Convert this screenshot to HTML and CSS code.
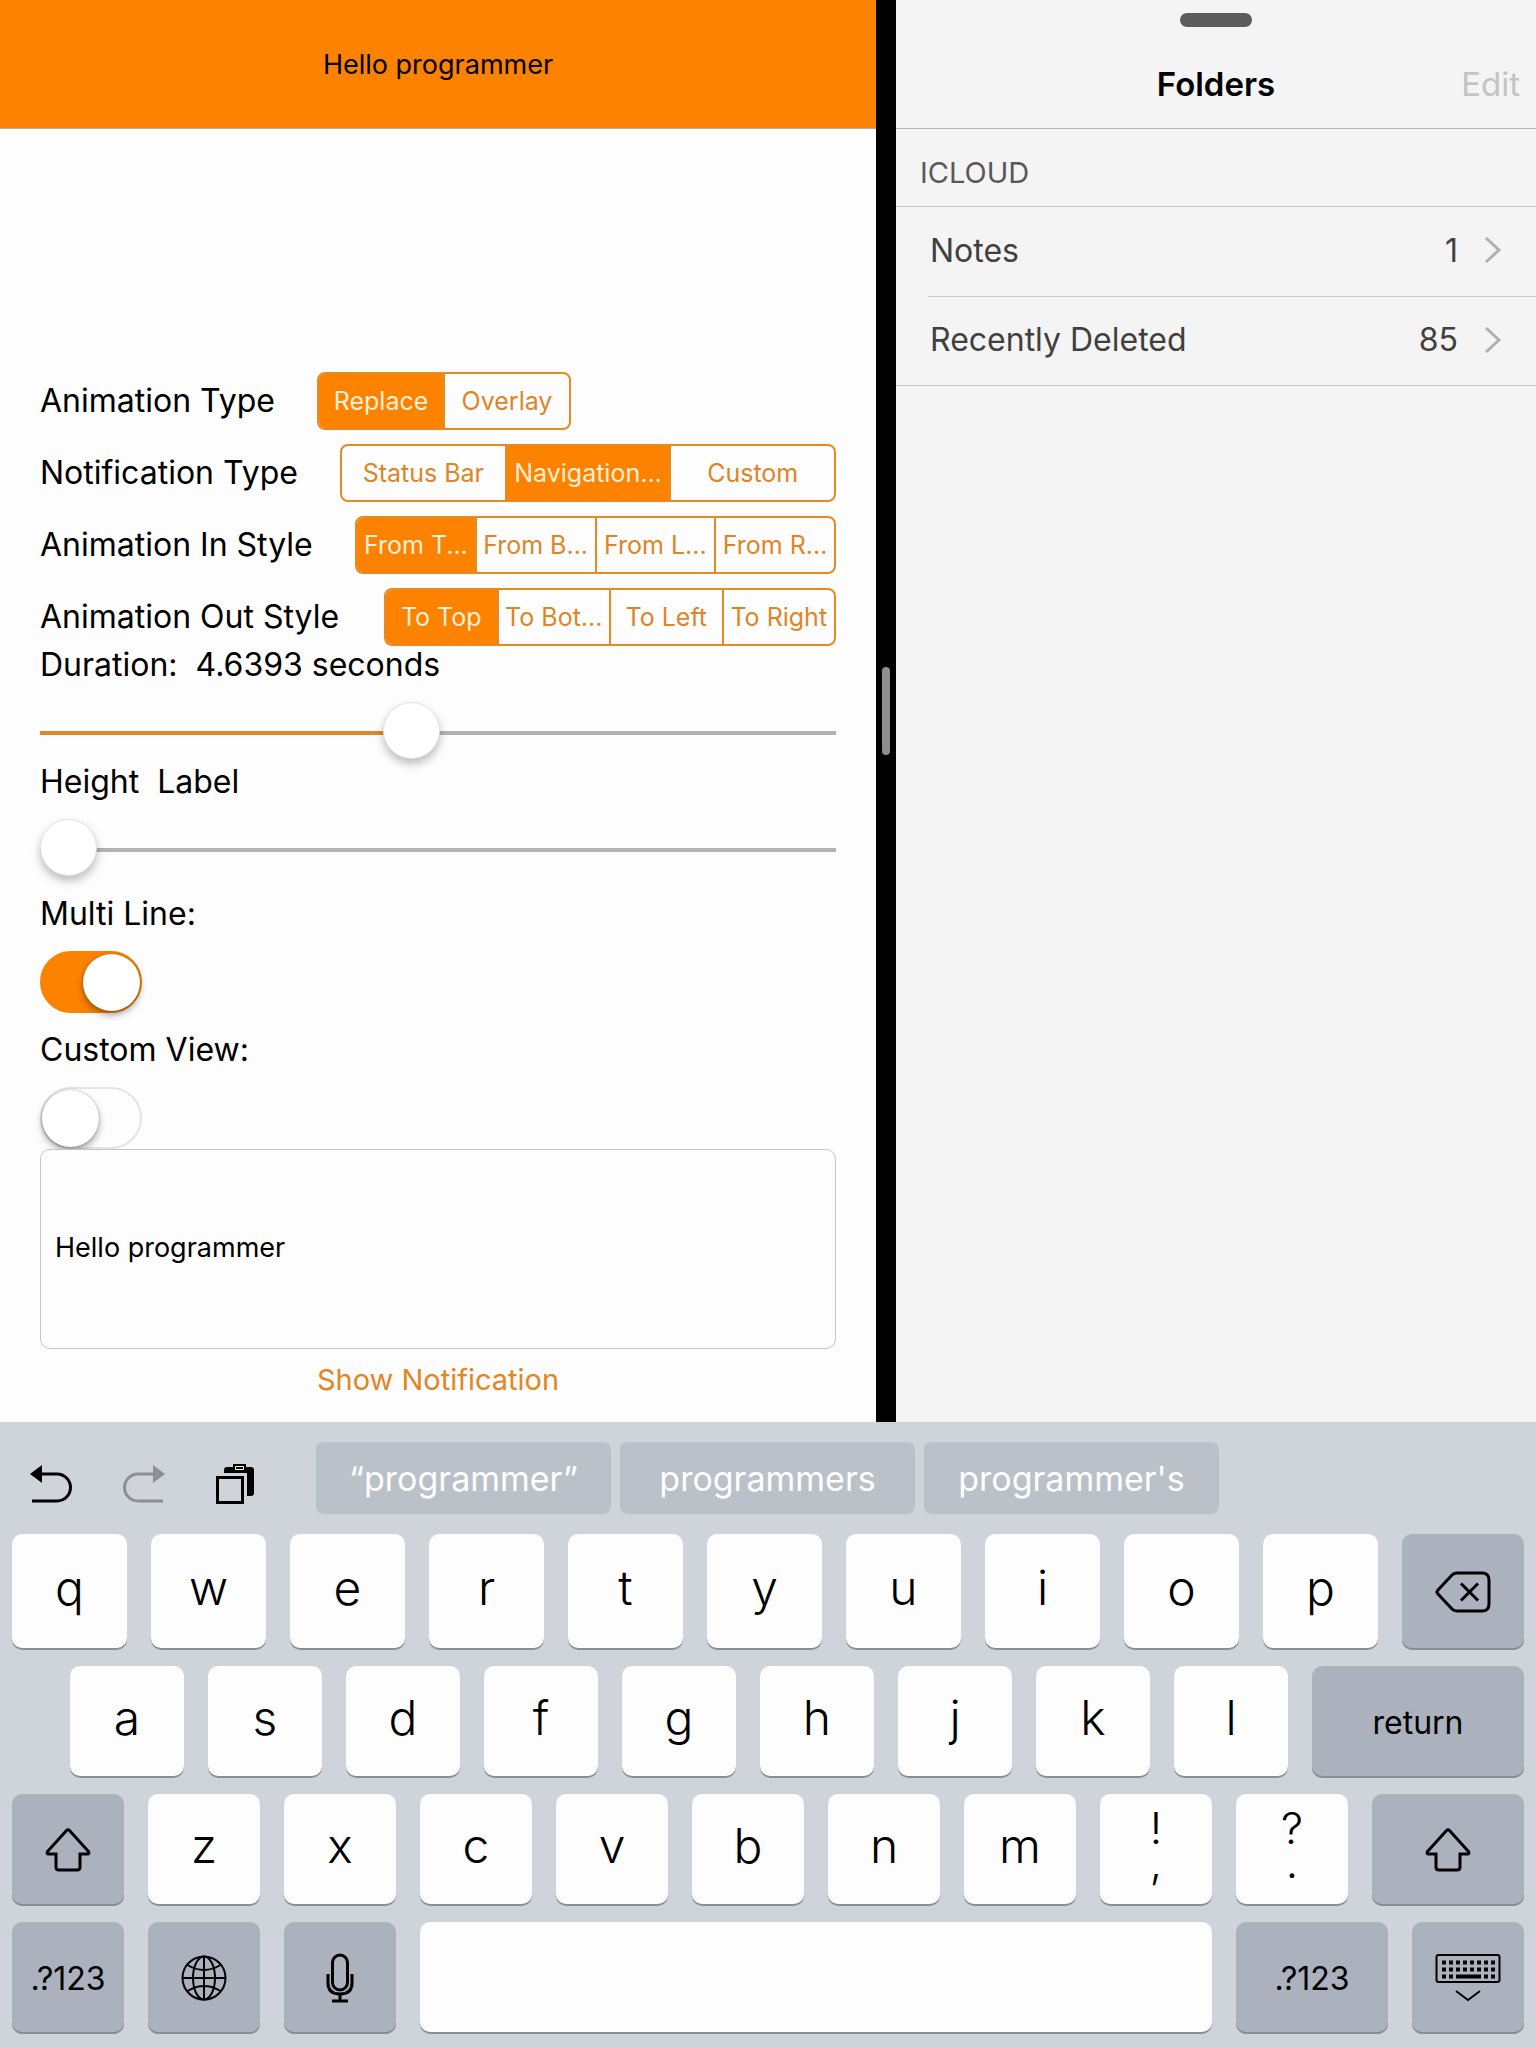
FILE: index.html
```html
<!DOCTYPE html>
<html lang="en">
<head>
<meta charset="utf-8">
<meta name="viewport" content="width=device-width, initial-scale=1">
<title>Hello programmer</title>
<link rel="stylesheet" href="styles.css">
</head>
<body>
<div class="screen">
  <div class="split">
    <main class="demo">
      <header class="banner">Hello programmer</header>
      <form class="settings">
        <div class="choices">
          <div class="choice choice--short">
            <span class="label" id="type-label">Animation Type</span>
            <div class="segments" role="group" aria-labelledby="type-label">
              <button type="button" class="segment segment--on">Replace</button>
              <button type="button" class="segment">Overlay</button>
            </div>
          </div>
          <div class="choice choice--notification">
            <span class="label" id="notification-label">Notification Type</span>
            <div class="segments" role="group" aria-labelledby="notification-label">
              <button type="button" class="segment">Status Bar</button>
              <button type="button" class="segment segment--on">Navigation...</button>
              <button type="button" class="segment">Custom</button>
            </div>
          </div>
          <div class="choice choice--in">
            <span class="label" id="in-label">Animation In Style</span>
            <div class="segments" role="group" aria-labelledby="in-label">
              <button type="button" class="segment segment--on">From T...</button>
              <button type="button" class="segment">From B...</button>
              <button type="button" class="segment">From L...</button>
              <button type="button" class="segment">From R...</button>
            </div>
          </div>
          <div class="choice choice--out">
            <span class="label" id="out-label">Animation Out Style</span>
            <div class="segments" role="group" aria-labelledby="out-label">
              <button type="button" class="segment segment--on">To Top</button>
              <button type="button" class="segment">To Bot...</button>
              <button type="button" class="segment">To Left</button>
              <button type="button" class="segment">To Right</button>
            </div>
          </div>
        </div>
        <label class="label" for="duration">Duration:&nbsp; 4.6393 seconds</label>
        <input class="slider slider--duration" id="duration" type="range" min="0" max="10" step="0.0001" value="4.6393">
        <label class="label" for="height">Height&nbsp; Label</label>
        <input class="slider slider--height" id="height" type="range" min="0" max="100" value="0">
        <label class="label" for="multi">Multi Line:</label>
        <input class="switch" id="multi" type="checkbox" role="switch" checked>
        <label class="label" for="custom">Custom View:</label>
        <input class="switch switch--last" id="custom" type="checkbox" role="switch">
        <input class="message" type="text" value="Hello programmer" aria-label="Message">
        <button type="button" class="show">Show Notification</button>
      </form>
    </main>

    <div class="divider"><span class="divider-grip"></span></div>

    <aside class="notes">
      <header class="notes-bar">
        <span class="notes-grip"></span>
        <h1 class="notes-title">Folders</h1>
        <button type="button" class="edit" disabled>Edit</button>
      </header>
      <h2 class="account">ICLOUD</h2>
      <nav class="folders">
        <a class="folder" href="#notes"><span class="folder-name">Notes</span><span>1</span>
          <svg class="chevron" viewBox="0 0 18 28"><path d="M2 2l13 12L2 26"/></svg></a>
        <a class="folder" href="#deleted"><span class="folder-name">Recently Deleted</span><span>85</span>
          <svg class="chevron" viewBox="0 0 18 28"><path d="M2 2l13 12L2 26"/></svg></a>
      </nav>
    </aside>
  </div>

  <section class="keyboard" aria-label="Keyboard">
    <div class="assist">
      <div class="tools">
        <button type="button" class="tool" aria-label="Undo">
          <svg width="42" height="38" viewBox="0 0 42 38"><path d="M0 9L12 0v18z" fill="currentColor"/><path d="M10 9h17a13.500 13.500 0 0 1 0 27H2" fill="none" stroke="currentColor" stroke-width="3"/></svg>
        </button>
        <button type="button" class="tool tool--off" aria-label="Redo">
          <svg width="42" height="38" viewBox="0 0 42 38"><path d="M42 9L30 0v18z" fill="currentColor"/><path d="M32 9H15a13.500 13.500 0 0 0 0 27h25" fill="none" stroke="currentColor" stroke-width="3"/></svg>
        </button>
        <button type="button" class="tool" aria-label="Paste">
          <svg width="39" height="40" viewBox="0 0 39 40"><path d="M8 9V6q0-3 3-3h6V0h13v3h5q3 0 3 3v23q0 3-3 3h-4V9z" fill="currentColor"/><path d="M19.500 2.500h8v3h-8z" fill="currentColor" stroke="#fff" stroke-width="1"/><path d="M1.500 13.500h25v25h-25z" fill="none" stroke="currentColor" stroke-width="3"/></svg>
        </button>
      </div>
      <div class="suggestions">
        <button type="button" class="suggestion">“programmer”</button>
        <button type="button" class="suggestion">programmers</button>
        <button type="button" class="suggestion">programmer's</button>
      </div>
    </div>
    <div class="keys keys--top">
      <button type="button" class="key">q</button><button type="button" class="key">w</button><button type="button" class="key">e</button><button type="button" class="key">r</button><button type="button" class="key">t</button><button type="button" class="key">y</button><button type="button" class="key">u</button><button type="button" class="key">i</button><button type="button" class="key">o</button><button type="button" class="key">p</button>
      <button type="button" class="key key--dark key--delete" aria-label="Delete">
        <svg width="56" height="42" viewBox="0 0 56 42"><path d="M22 2h25q7 0 7 7v24q0 7-7 7H22q-3 0-5-2L3 23q-2-2 0-4L17 4q2-2 5-2z"/><path d="M26 12.500l17 17M43 12.500l-17 17"/></svg>
      </button>
    </div>
    <div class="keys keys--home">
      <button type="button" class="key">a</button><button type="button" class="key">s</button><button type="button" class="key">d</button><button type="button" class="key">f</button><button type="button" class="key">g</button><button type="button" class="key">h</button><button type="button" class="key">j</button><button type="button" class="key">k</button><button type="button" class="key">l</button>
      <button type="button" class="key key--dark key--return">return</button>
    </div>
    <div class="keys">
      <button type="button" class="key key--dark" aria-label="Shift">
        <svg width="46" height="44" viewBox="0 0 46 44"><path d="M21.500 2.500q1.500-1.500 3 0l19 21q1 2.500-1 2.500H35v13q0 3-3 3H14q-3 0-3-3V26H3.500q-2 0-1-2.500z"/></svg>
      </button>
      <button type="button" class="key">z</button><button type="button" class="key">x</button><button type="button" class="key">c</button><button type="button" class="key">v</button><button type="button" class="key">b</button><button type="button" class="key">n</button><button type="button" class="key">m</button>
      <button type="button" class="key key--pair">!<br>,</button>
      <button type="button" class="key key--pair">?<br>.</button>
      <button type="button" class="key key--dark key--wide" aria-label="Shift">
        <svg width="46" height="44" viewBox="0 0 46 44"><path d="M21.500 2.500q1.500-1.500 3 0l19 21q1 2.500-1 2.500H35v13q0 3-3 3H14q-3 0-3-3V26H3.500q-2 0-1-2.500z"/></svg>
      </button>
    </div>
    <div class="keys">
      <button type="button" class="key key--dark">.?123</button>
      <button type="button" class="key key--dark" aria-label="Next keyboard">
        <svg class="thin" width="46" height="46" viewBox="0 0 46 46"><circle cx="23" cy="23" r="21.500"/><ellipse cx="23" cy="23" rx="11" ry="21.500"/><path d="M23 1.500v43M1.500 23h43M6.500 10q16.500 10 33 0M6.500 36q16.500-10 33 0"/></svg>
      </button>
      <button type="button" class="key key--dark" aria-label="Dictate">
        <svg width="28" height="50" viewBox="0 0 28 50"><rect x="6.500" y="2" width="15" height="35" rx="7.500"/><path d="M2 21v9q0 11 12 11t12-11v-9M14 41v7M6 48h16"/></svg>
      </button>
      <button type="button" class="key key--space" aria-label="Space"></button>
      <button type="button" class="key key--dark key--wide">.?123</button>
      <button type="button" class="key key--dark" aria-label="Hide keyboard">
        <svg class="thin" width="66" height="50" viewBox="0 0 66 50"><rect x="1.500" y="2" width="63" height="27" rx="2"/><path d="M7 9.500h53M7 16.500h53" stroke-width="4" stroke-dasharray="4 3"/><path d="M7 23.500h11M49 23.500h11" stroke-width="4" stroke-dasharray="4 3"/><path d="M21 23.500h25" stroke-width="4"/><path d="M21 38l12 9 12-9"/></svg>
      </button>
    </div>
  </section>
</div>
</body>
</html>
```

FILE: styles.css
```css
* {
  box-sizing: border-box;
}

body {
  margin: 0;
  font-family: Inter, "Liberation Sans", sans-serif;
  color: #000;
  background: #cfd3da;
}

button,
input {
  margin: 0;
  font: inherit;
  color: inherit;
}

button {
  padding: 0;
  border: 0;
  background: none;
}

.screen {
  display: flex;
  flex-direction: column;
  min-height: 100vh;
}

.split {
  flex: 1;
  display: flex;
}

/* Demo app */
.demo {
  flex: 876 1 0;
  min-width: 0;
  background: #fdfdfd;
}

.banner {
  display: flex;
  align-items: center;
  justify-content: center;
  height: 129px;
  border-bottom: 1px solid #b9aea0;
  background: #fc8200;
  font-size: 27px;
}

.settings {
  display: flex;
  flex-direction: column;
  padding: 243px 40px 13px;
}

.choices {
  display: flex;
  flex-direction: column;
  gap: 14px;
}

.choice {
  display: grid;
  align-items: center;
}

.choice--short { grid-template-columns: 277px 254px; }
.choice--notification { grid-template-columns: 300px 1fr; }
.choice--in { grid-template-columns: 315px 1fr; }
.choice--out { grid-template-columns: 344px 1fr; }

.label {
  font-size: 32px;
  line-height: 38px;
  white-space: nowrap;
}

.segments {
  display: flex;
  height: 58px;
  border: 2px solid #e68a26;
  border-radius: 8px;
  overflow: hidden;
}

.segment {
  flex: 1 1 0;
  min-width: 0;
  color: #dd8527;
  font-size: 25px;
  white-space: nowrap;
}

.segment + .segment {
  border-left: 2px solid #e68a26;
}

.segment--on {
  background: #fc8200;
  color: #fff0d8;
}

.slider {
  appearance: none;
  width: 100%;
  height: 57px;
  margin: 18px 0 4px;
  background: linear-gradient(#b2b2b2, #b2b2b2) 0 29px / 100% 4px no-repeat;
}

.slider--duration {
  background: linear-gradient(90deg, #e2862a 46%, #b2b2b2 46%) 0 29px / 100% 4px no-repeat;
}

.slider--height {
  margin-bottom: 19px;
}

.slider::-webkit-slider-thumb {
  appearance: none;
  width: 57px;
  height: 57px;
  border: 1px solid #e2e2e2;
  border-radius: 50%;
  background: #fff;
  box-shadow: 0 5px 8px rgba(0, 0, 0, 0.25);
}

.switch {
  appearance: none;
  display: flex;
  align-items: center;
  width: 102px;
  height: 62px;
  margin: 18px 0;
  border: 2px solid #e4e4e4;
  border-radius: 31px;
}

.switch::before {
  content: "";
  width: 57px;
  height: 57px;
  border-radius: 50%;
  background: #fff;
  box-shadow: 0 4px 7px rgba(0, 0, 0, 0.35), 0 0 2px rgba(0, 0, 0, 0.3);
}

.switch:checked {
  justify-content: flex-end;
  border-color: #fc8200;
  background: #fc8200;
}

.switch--last {
  margin-bottom: 0;
}

.message {
  width: 100%;
  height: 200px;
  padding: 0 14px 4px;
  border: 1px solid #c4c4c4;
  border-radius: 10px;
  background: #fdfdfd;
  font-size: 27px;
}

.show {
  align-self: center;
  height: 60px;
  color: #e2861f;
  font-size: 29px;
}

/* Divider between the two apps */
.divider {
  display: flex;
  align-items: center;
  justify-content: center;
  width: 20px;
  background: #000;
}

.divider-grip {
  width: 8px;
  height: 88px;
  border-radius: 4px;
  background: #8e8e8e;
}

/* Notes app */
.notes {
  flex: 640 1 0;
  min-width: 0;
  background: #f4f4f4;
}

.notes-bar {
  display: grid;
  grid-template-columns: 1fr auto 1fr;
  grid-template-rows: 27px 1fr;
  align-items: center;
  height: 129px;
  padding: 0 16px 30px;
  border-bottom: 1px solid #b4b4b4;
}

.notes-grip {
  grid-column: 1 / 4;
  justify-self: center;
  align-self: end;
  width: 72px;
  height: 14px;
  border-radius: 7px;
  background: #5c5c5c;
}

.notes-title {
  grid-column: 2;
  align-self: end;
  margin: 0;
  font-size: 33px;
  line-height: 28px;
  font-weight: 600;
}

.edit {
  justify-self: end;
  align-self: end;
  color: #c4c4c4;
  font-size: 33px;
  line-height: 28px;
}

.account {
  margin: 0;
  padding: 26px 24px 15px;
  border-bottom: 1px solid #c8c8c8;
  color: #585858;
  font-size: 29px;
  line-height: 36px;
  font-weight: 400;
}

.folders {
  border-bottom: 1px solid #c8c8c8;
}

.folder {
  display: flex;
  align-items: center;
  height: 89px;
  margin-left: 32px;
  padding: 0 34px 3px 2px;
  color: #404040;
  font-size: 32px;
  text-decoration: none;
}

.folder + .folder {
  border-top: 1px solid #c8c8c8;
}

.folder-name {
  flex: 1;
}

.chevron {
  width: 18px;
  height: 28px;
  margin-left: 26px;
  fill: none;
  stroke: #b0b0b0;
  stroke-width: 3;
}

/* Keyboard */
.keyboard {
  display: flex;
  flex-direction: column;
  gap: 16px;
  padding: 20px 12px 14px;
  background: #cfd3da;
}

.assist {
  display: flex;
  align-items: center;
  margin-bottom: 4px;
}

.tools {
  display: flex;
  align-items: center;
  gap: 51px;
  width: 304px;
  padding: 12px 0 0 18px;
}

.tool {
  display: flex;
}

.tool--off {
  color: #8e8e98;
}

.suggestions {
  display: flex;
  gap: 9px;
}

.suggestion {
  width: 295px;
  height: 72px;
  border-radius: 8px;
  background: #bac1c8;
  color: #fff;
  font-size: 34px;
}

.keys {
  display: flex;
  gap: 24px;
}

.key {
  display: flex;
  align-items: center;
  justify-content: center;
  flex: 112 1 0;
  min-width: 0;
  height: 112px;
  padding-bottom: 10px;
  border-radius: 10px;
  background: #fdfdfd;
  box-shadow: inset 0 -2px #8c8e96;
  font-size: 48px;
  font-weight: 300;
}

.keys--top .key {
  flex-grow: 115;
  height: 116px;
}

.keys--home {
  padding-left: 58px;
}

.keys--home .key {
  flex-grow: 114;
}

.key svg {
  fill: none;
  stroke: #000;
  stroke-width: 3;
}

.key svg.thin {
  stroke-width: 2;
}

.key.key--dark {
  padding-bottom: 0;
  background: #abb1bd;
  font-size: 32px;
  font-weight: 400;
}

.keys .key--wide { flex-grow: 152; }
.keys .key--space { flex-grow: 792; }
.keys .key--return { flex-grow: 212; }
.keys .key--delete { flex-grow: 122; }

.key--pair {
  display: block;
  font-size: 44px;
  line-height: 34px;
}
```
